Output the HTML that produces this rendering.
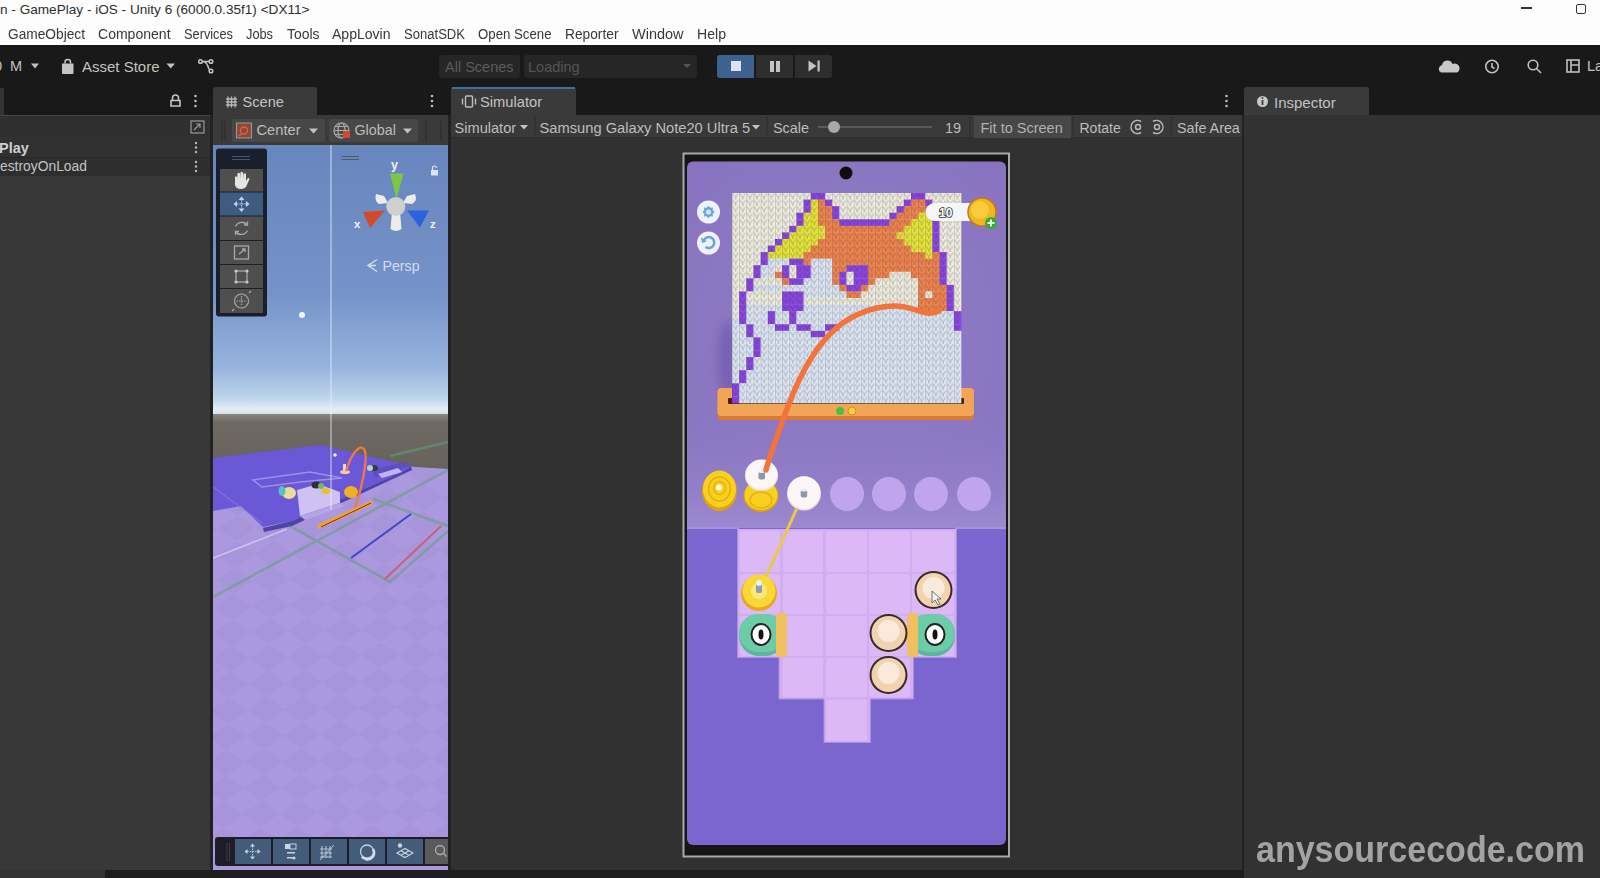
<!DOCTYPE html>
<html><head><meta charset="utf-8">
<style>
*{box-sizing:border-box;margin:0;padding:0}
html,body{width:1600px;height:878px;overflow:hidden;background:#191919;font-family:"Liberation Sans",sans-serif;position:relative}
.a{position:absolute}
.t{position:absolute;white-space:nowrap;line-height:1}
.m{position:absolute;white-space:nowrap;line-height:1;top:26.8px;font-size:14px;color:#383838}
.tb{position:absolute;white-space:nowrap;line-height:1;color:#c2c2c2;font-size:14.5px}
svg{position:absolute;left:0;top:0}
</style></head><body>
<!-- title + menu -->
<div class="a" style="left:0;top:0;width:1600px;height:45px;background:#fdfdfd"></div>
<div class="t" style="left:0;top:3px;font-size:13.6px;color:#2e2e2e">n - GamePlay - iOS - Unity 6 (6000.0.35f1) &lt;DX11&gt;</div>
<div class="m" style="left:8px;transform:scaleX(0.980);transform-origin:0 0">GameObject</div>
<div class="m" style="left:98px;transform:scaleX(1.002);transform-origin:0 0">Component</div>
<div class="m" style="left:184px;transform:scaleX(0.913);transform-origin:0 0">Services</div>
<div class="m" style="left:246px;transform:scaleX(0.913);transform-origin:0 0">Jobs</div>
<div class="m" style="left:286.5px;transform:scaleX(0.994);transform-origin:0 0">Tools</div>
<div class="m" style="left:332px;transform:scaleX(1.002);transform-origin:0 0">AppLovin</div>
<div class="m" style="left:404px;transform:scaleX(0.933);transform-origin:0 0">SonatSDK</div>
<div class="m" style="left:478px;transform:scaleX(0.944);transform-origin:0 0">Open Scene</div>
<div class="m" style="left:565px;transform:scaleX(0.982);transform-origin:0 0">Reporter</div>
<div class="m" style="left:631.5px;transform:scaleX(1.034);transform-origin:0 0">Window</div>
<div class="m" style="left:696.5px;transform:scaleX(1.007);transform-origin:0 0">Help</div>
<!-- window controls -->
<div class="a" style="left:1521px;top:7px;width:11px;height:1.5px;background:#333"></div>
<div class="a" style="left:1576px;top:4px;width:10px;height:10px;border:1.5px solid #333;border-radius:2px"></div>

<!-- main toolbar -->
<div class="a" style="left:0;top:45px;width:1600px;height:42px;background:#191919"></div>
<div class="tb" style="left:-6px;top:59px">0</div>
<div class="tb" style="left:10px;top:59px">M</div>
<svg width="1600" height="878" style="pointer-events:none">
  <path d="M31 63.5 L39 63.5 L35 68.5Z" fill="#c2c2c2"/>
  <!-- bag -->
  <path d="M62 63.5 h11.5 v9.5 a1 1 0 0 1 -1 1 h-9.5 a1 1 0 0 1 -1 -1z" fill="#c4c4c4"/>
  <path d="M65 63.5 v-1.5 a2.75 2.5 0 0 1 5.5 0 v1.5" stroke="#c4c4c4" stroke-width="1.5" fill="none"/>
  <path d="M166.5 63.5 L175 63.5 L170.75 68.5Z" fill="#c2c2c2"/>
  <!-- branch icon -->
  <g stroke="#c4c4c4" stroke-width="1.5" fill="none">
    <circle cx="200.5" cy="61.5" r="1.8"/><circle cx="211" cy="61.5" r="1.8"/><circle cx="211" cy="71" r="1.8"/>
    <path d="M202 61.5 h7 M203 61.5 q4 0 6 8"/>
  </g>
</svg>
<div class="tb" style="left:82px;top:59px;font-size:15px">Asset Store</div>
<!-- scenes -->
<div class="a" style="left:439px;top:55px;width:81px;height:23px;background:#262626;border-radius:3px"></div>
<div class="tb" style="left:445px;top:59.5px;font-size:14.5px;color:#5c5c5c">All Scenes</div>
<div class="a" style="left:524px;top:55px;width:173px;height:23px;background:#262626;border-radius:3px"></div>
<div class="tb" style="left:528px;top:59.5px;font-size:14.5px;color:#555">Loading</div>
<svg width="1600" height="878"><path d="M683 64 L691 64 L687 68Z" fill="#555"/></svg>
<!-- play controls -->
<div class="a" style="left:717px;top:55px;width:37px;height:23px;background:#3f6190;border-radius:3px 0 0 3px"></div>
<div class="a" style="left:756px;top:55px;width:37px;height:23px;background:#2e2e2e"></div>
<div class="a" style="left:795px;top:55px;width:37px;height:23px;background:#2e2e2e;border-radius:0 3px 3px 0"></div>
<div class="a" style="left:731px;top:61px;width:10px;height:10px;background:#dde3ea"></div>
<div class="a" style="left:770px;top:60.5px;width:3.5px;height:11px;background:#c4c4c4"></div>
<div class="a" style="left:776px;top:60.5px;width:3.5px;height:11px;background:#c4c4c4"></div>
<svg width="1600" height="878"><path d="M808.5 60.5 L816.5 66 L808.5 71.5Z" fill="#c4c4c4"/><rect x="817.5" y="60.5" width="2.2" height="11" fill="#c4c4c4"/></svg>
<!-- right icons -->
<svg width="1600" height="878">
  <path d="M1441 72.5 a4 4 0 0 1 1-7.5 a5.5 5.5 0 0 1 10.5-1 a4 4 0 0 1 4.5 8.5z" fill="#c8c8c8"/>
  <g stroke="#c0c0c0" stroke-width="1.6" fill="none">
    <circle cx="1492" cy="66.5" r="6.2"/><path d="M1492 63 v4 l2.5 1.5"/>
    <circle cx="1533" cy="65" r="4.8"/><path d="M1536.5 68.5 l4.5 4.5"/>
    <rect x="1567" y="60" width="12" height="12"/><path d="M1571 60 v12 M1571 65 h8"/>
  </g>
</svg>
<div class="tb" style="left:1587px;top:59px;font-size:14.5px">La</div>

<!-- tab row -->
<div class="a" style="left:0;top:87px;width:1600px;height:28px;background:#191919"></div>
<div class="a" style="left:0;top:88px;width:4px;height:27px;background:#333"></div>
<svg width="1600" height="878">
  <g stroke="#c4c4c4" stroke-width="1.6" fill="none"><path d="M171 106 h9 v-5.5 h-9 z M172.5 100.5 v-2.5 a3 3 0 0 1 6 0 v2.5"/></g>
  <g fill="#bdbdbd"><circle cx="195.5" cy="96" r="1.3"/><circle cx="195.5" cy="101" r="1.3"/><circle cx="195.5" cy="106" r="1.3"/>
  <circle cx="432" cy="96" r="1.3"/><circle cx="432" cy="101" r="1.3"/><circle cx="432" cy="106" r="1.3"/>
  <circle cx="1226.5" cy="96" r="1.3"/><circle cx="1226.5" cy="101" r="1.3"/><circle cx="1226.5" cy="106" r="1.3"/></g>
</svg>
<!-- hierarchy body -->
<div class="a" style="left:0;top:115px;width:210px;height:755px;background:#383838"></div>
<div class="a" style="left:0;top:115px;width:210px;height:1px;background:#454545"></div>
<div class="a" style="left:0;top:116px;width:210px;height:21px;background:#2f2f2f"></div>
<div class="a" style="left:0;top:137px;width:210px;height:20px;background:#303030"></div>
<div class="a" style="left:0;top:157px;width:210px;height:19px;background:#2e2e2e"></div>
<div class="a" style="left:0;top:157px;width:210px;height:1px;background:#262626"></div>
<svg width="1600" height="878">
  <g stroke="#9a9a9a" stroke-width="1.2" fill="none"><rect x="191" y="121" width="13" height="12"/><path d="M194 130 l6-6 M196 124 h4 v4"/></g>
  <g fill="#b8b8b8"><circle cx="196" cy="143" r="1.2"/><circle cx="196" cy="147.5" r="1.2"/><circle cx="196" cy="152" r="1.2"/>
  <circle cx="196" cy="162" r="1.2"/><circle cx="196" cy="166.5" r="1.2"/><circle cx="196" cy="171" r="1.2"/></g>
</svg>
<div class="t" style="left:-1px;top:141px;font-size:14.5px;font-weight:bold;color:#cfcfcf">Play</div>
<div class="t" style="left:0;top:160px;font-size:13.85px;color:#c4c4c4">estroyOnLoad</div>
<div class="a" style="left:0;top:870px;width:105px;height:8px;background:#333"></div>

<!-- scene tab + toolbar -->
<div class="a" style="left:213px;top:87px;width:104px;height:28px;background:#3a3a3a;border-radius:3px 3px 0 0"></div>
<div class="t" style="left:242.5px;top:95px;font-size:14.6px;color:#c2c2c2">Scene</div>
<svg width="1600" height="878"><g stroke="#b8b8b8" stroke-width="1.3"><path d="M228 96.5 v11 M231.5 96.5 v11 M235 96.5 v11 M226 99 h11 M226 102 h11 M226 105 h11"/></g></svg>
<div class="a" style="left:213px;top:115px;width:235px;height:30px;background:#3a3a3a"></div>
<div class="a" style="left:231.5px;top:119px;width:93px;height:23px;background:#474747;border-radius:2px"></div>
<div class="a" style="left:329px;top:119px;width:89px;height:23px;background:#474747;border-radius:2px"></div>
<svg width="1600" height="878">
  <rect x="236.5" y="123" width="15" height="15" fill="#8c4a38" stroke="#9a9a9a" stroke-width="1"/>
  <circle cx="244" cy="130.5" r="3.5" stroke="#e06040" stroke-width="1.3" fill="none"/><path d="M239 136 l3-3" stroke="#e06040" stroke-width="1.3"/>
  <path d="M309 128.5 h9 l-4.5 5z" fill="#c2c2c2"/>
  <g stroke="#aaa" stroke-width="1.2" fill="none"><circle cx="341.5" cy="130.5" r="7.5"/><ellipse cx="341.5" cy="130.5" rx="3.5" ry="7.5"/><path d="M334 130.5 h15 M335 126.5 h13 M335 134.5 h13"/></g>
  <rect x="343" y="131" width="7" height="7" fill="#c84a30"/>
  <path d="M403 128.5 h9 l-4.5 5z" fill="#c2c2c2"/>
  <g stroke="#2a2a2a" stroke-width="1"><path d="M222 121 v20 M225 121 v20 M426 121 v20 M441 121 v20"/></g>
</svg>
<div class="t" style="left:256.5px;top:123.2px;font-size:14.7px;color:#bdbdbd">Center</div>
<div class="t" style="left:354.5px;top:123.2px;font-size:14.3px;color:#bdbdbd">Global</div>

<!-- simulator tab + toolbar -->
<div class="a" style="left:451px;top:87px;width:125px;height:28px;background:#3a3a3a;border-radius:3px 3px 0 0"></div>
<div class="a" style="left:452px;top:87px;width:123px;height:2px;background:#3b6ea5"></div>
<svg width="1600" height="878"><g stroke="#bcbcbc" stroke-width="1.4" fill="none"><rect x="465.5" y="96" width="7" height="11" rx="1"/><path d="M462.5 98.5 v6 M475.5 98.5 v6"/></g></svg>
<div class="t" style="left:480px;top:95px;font-size:14.7px;color:#c2c2c2">Simulator</div>
<div class="a" style="left:451px;top:115px;width:791px;height:22px;background:#393939"></div>
<div class="a" style="left:451px;top:137px;width:791px;height:733px;background:#313131"></div>
<div class="a" style="left:451px;top:137px;width:791px;height:1px;background:#2c2c2c"></div>
<div class="t" style="left:454.5px;top:120.8px;font-size:14.6px;color:#bdbdbd">Simulator</div>
<div class="t" style="left:539.5px;top:120.8px;font-size:14.7px;color:#bdbdbd">Samsung Galaxy Note20 Ultra 5</div>
<div class="t" style="left:773px;top:120.8px;font-size:14.4px;color:#bdbdbd">Scale</div>
<div class="a" style="left:973.5px;top:115.5px;width:97.5px;height:22px;background:#474747"></div>
<div class="t" style="left:980.5px;top:120.8px;font-size:14.5px;color:#b0b0b0">Fit to Screen</div>
<div class="t" style="left:945px;top:120.8px;font-size:14.5px;color:#bdbdbd">19</div>
<div class="t" style="left:1079.5px;top:120.8px;font-size:14px;color:#bdbdbd">Rotate</div>
<div class="t" style="left:1177px;top:120.8px;font-size:14.3px;color:#bdbdbd">Safe Area</div>
<svg width="1600" height="878">
  <path d="M520 125 h8 l-4 4.5z M752 125 h8 l-4 4.5z" fill="#c2c2c2"/>
  <rect x="818" y="126" width="114" height="2" fill="#5a5a5a"/>
  <circle cx="834" cy="127" r="6" fill="#a8a8a8"/>
  <g stroke="#b8b8b8" stroke-width="1.5" fill="none">
    <path d="M1141 121.5 a6.5 6.5 0 1 0 0 11"/><circle cx="1138" cy="127" r="2.5"/>
    <path d="M1153 121.5 a6.5 6.5 0 1 1 0 11"/><circle cx="1157" cy="127" r="2.5"/>
  </g>
  <g stroke="#2c2c2c" stroke-width="1"><path d="M535 117 v18 M767 117 v18 M970 117 v18 M1073 117 v18 M1171 117 v18"/></g>
</svg>
<!-- separators -->
<div class="a" style="left:1242px;top:115px;width:2px;height:755px;background:#222"></div>
<div class="a" style="left:448px;top:115px;width:3px;height:755px;background:#222"></div>
<div class="a" style="left:210px;top:115px;width:3px;height:755px;background:#222"></div>

<!-- inspector -->
<div class="a" style="left:1244px;top:87px;width:125px;height:28px;background:#3a3a3a;border-radius:3px 3px 0 0"></div>
<svg width="1600" height="878"><circle cx="1262.5" cy="101.5" r="5.5" fill="#c8c8c8"/><rect x="1261.6" y="100" width="1.8" height="5" fill="#3a3a3a"/><circle cx="1262.5" cy="98" r="1" fill="#3a3a3a"/></svg>
<div class="t" style="left:1274px;top:95px;font-size:15px;color:#c2c2c2">Inspector</div>
<div class="a" style="left:1244px;top:115px;width:356px;height:763px;background:#323232"></div>

<!-- bottom strip -->
<div class="a" style="left:105px;top:870px;width:1139px;height:8px;background:#1e1e1e"></div>
<!-- watermark -->
<div class="t" style="left:1256px;top:832px;font-size:36px;font-weight:bold;color:#a3a3a3;transform:scaleX(0.945);transform-origin:0 0">anysourcecode.com</div>

<svg width="1600" height="878">
<defs>
  <linearGradient id="sky" x1="0" y1="145" x2="0" y2="416" gradientUnits="userSpaceOnUse">
    <stop offset="0" stop-color="#6786be"/>
    <stop offset="0.55" stop-color="#7593c8"/>
    <stop offset="0.82" stop-color="#97b4de"/>
    <stop offset="0.93" stop-color="#bcd3ea"/>
    <stop offset="0.975" stop-color="#e2edf4"/>
    <stop offset="1" stop-color="#d8dde0"/>
  </linearGradient>
  <linearGradient id="grd" x1="0" y1="414" x2="0" y2="470" gradientUnits="userSpaceOnUse">
    <stop offset="0" stop-color="#8a857e"/>
    <stop offset="0.15" stop-color="#6e6962"/>
    <stop offset="1" stop-color="#67625c"/>
  </linearGradient>
  <clipPath id="scl"><rect x="213" y="145" width="235" height="725"/></clipPath>
  <pattern id="chk" width="44" height="44" patternUnits="userSpaceOnUse" patternTransform="rotate(35) skewX(-20)">
    <rect width="44" height="44" fill="#ab98de"/>
    <rect width="22" height="22" fill="#a894da"/>
    <rect x="22" y="22" width="22" height="22" fill="#a894da"/>
  </pattern>
</defs>
<g clip-path="url(#scl)">
  <rect x="213" y="145" width="235" height="272" fill="url(#sky)"/>
  <rect x="213" y="414" width="235" height="60" fill="url(#grd)"/>
  <!-- light purple ground plane -->
  <path d="M213 492 L300 462 L400 466 L448 469 L448 870 L213 870Z" fill="url(#chk)"/>
  <!-- grid lines -->
  <g stroke="#62a07c" stroke-width="2.6" opacity="0.55" fill="none">
    <path d="M390 456 L448 442"/>
    <path d="M213 597 L448 470"/>
    <path d="M290 526 L390 582 L448 531"/>
    <path d="M373 499 L448 526"/>
  </g>
  <path d="M213 558 L287 529" stroke="#d9d0f4" stroke-width="1.5" opacity="0.8"/>
  <path d="M351 558 L411 514" stroke="#3a48c8" stroke-width="2"/>
  <path d="M385 579 L441 526" stroke="#c86070" stroke-width="2"/>
  <!-- dark platform -->
  <path d="M213 458 L320 445 L411 466 L402 472 L292 521 L263 527 L241 506 L213 511Z" fill="#6a58d6"/>
  <path d="M213 487 L262 523" stroke="#8a7ae0" stroke-width="1.2" opacity="0.7"/>
  <path d="M263 528 L292 521 L402 472 L411 466 L412 470 L292 526 L264 532Z" fill="#4f43a8"/>
  <path d="M253 480 L310 472 L342 478 L300 482 L262 487Z" fill="none" stroke="#b5a6ec" stroke-width="1.5" opacity="0.7"/>
  <!-- objects -->
  <path d="M372 470 L405 462 L410 466 L375 478Z" fill="#5d4fc0"/>
  <path d="M378 474 L398 468 L402 472 L382 478Z" fill="#d8ccf4" opacity="0.8"/>
  <path d="M297 490 L318 484 L340 492 L340 503 L300 516Z" fill="#cfc2f2"/>
  <path d="M300 516 L340 503 L345 506 L305 520Z" fill="#b4a4e8"/>
  <ellipse cx="289" cy="493" rx="7" ry="6" fill="#eedc96"/><ellipse cx="282" cy="491" rx="3.5" ry="5" fill="#58c0c0"/>
  <ellipse cx="316" cy="485" rx="4.5" ry="3.5" fill="#303038"/><ellipse cx="321" cy="486" rx="3" ry="3" fill="#7ab860"/>
  <ellipse cx="326" cy="491" rx="5" ry="3" fill="#e8c030"/>
  <ellipse cx="351" cy="492" rx="7" ry="6" fill="#f0b020"/>
  <ellipse cx="374" cy="468" rx="4" ry="3" fill="#3a3a40"/><ellipse cx="370" cy="468" rx="3" ry="3" fill="#b8d0c0"/>
  <rect x="343" y="464" width="3" height="8" fill="#e8d8d0"/><ellipse cx="345" cy="472" rx="5" ry="2" fill="#f4c8b0"/>
  <circle cx="335" cy="455" r="1.8" fill="#f0f0ff"/>
  <path d="M346 471 C352 452 360 444 364 449 C369 456 361 492 354 512" stroke="#f07848" stroke-width="2.3" fill="none"/>
  <path d="M319 529 L373 504 L372 500 L317 525Z" fill="#f0a038"/>
  <path d="M321 527 L371 503" stroke="#6a3a18" stroke-width="1"/>
  <!-- white vertical line -->
  <path d="M331 145 V510" stroke="#e8f0fa" stroke-width="1.1" opacity="0.75"/>
  <circle cx="302" cy="315" r="3" fill="#f4f4f4"/>
  <!-- tools overlay -->
  <rect x="216" y="148.5" width="51" height="168" rx="3" fill="#1a1f2c"/>
  <path d="M232 156.5 h18 M232 159.5 h18" stroke="#4a5670" stroke-width="1"/>
  <g fill="#4f4f4f">
    <rect x="220" y="169" width="43" height="22.5"/>
    <rect x="220" y="216.5" width="43" height="23.5"/><rect x="220" y="241" width="43" height="23"/>
    <rect x="220" y="265" width="43" height="23"/><rect x="220" y="289" width="43" height="24"/>
  </g>
  <rect x="220" y="192.5" width="43" height="23" fill="#3f5b80"/>
  <path d="M235 183 L235 177 Q236 175.5 237 177 L237 180 L237.5 173.5 Q238.8 172 240 173.5 L240 179 L240.5 172.5 Q241.8 171 243 172.5 L243 179 L243.5 174 Q244.8 172.5 246 174 L246 181 L247.5 178.5 Q249 177.5 249.5 179 L246.5 186 Q245 189 241 189 Q236 189 235 185Z" fill="#e4e4e4"/>
  <g fill="#b8d4ec">
    <path d="M241.5 196.5 l3 3.5 h-6z M241.5 212 l3-3.5 h-6z M233.5 204 l3.5-3 v6z M249.5 204 l-3.5-3 v6z"/>
  </g>
  <path d="M241.5 200 v8.5 M237 204 h9" stroke="#b8d4ec" stroke-width="1" stroke-dasharray="1.5 1"/>
  <g stroke="#a8a8a8" stroke-width="1.3" fill="none">
    <path d="M247.5 225 a7 7 0 0 0 -12 1.5 M235.5 231.5 a7 7 0 0 0 12 -1"/>
    <path d="M247.5 221.5 v3.5 h-3.5 M235.5 235 v-3.5 h3.5"/>
    <rect x="234.5" y="246" width="14" height="13"/><path d="M239 254 l6-5 M242 249 h3 v3"/>
    <rect x="236" y="271" width="11" height="11"/>
  </g>
  <g fill="#c8c8c8"><circle cx="236" cy="271" r="1.6"/><circle cx="247" cy="271" r="1.6"/><circle cx="236" cy="282" r="1.6"/><circle cx="247" cy="282" r="1.6"/></g>
  <g stroke="#a8a8a8" stroke-width="1.2" fill="none">
    <circle cx="241.5" cy="301" r="7"/><path d="M241.5 296 v10 M236.5 301 h10" stroke-dasharray="1.5 1"/>
    <path d="M249 293 l2 -2 M234 309 l-2 2"/>
  </g>
  <!-- gizmo -->
  <g fill="#ececec">
    <path d="M384 196 L376 194 Q374 201 379 204 L388 203Z"/>
    <path d="M407 196 L415 194 Q418 201 412 204 L403 203Z"/>
    <path d="M392 212 L400 212 L401.5 229 Q396 233 390.5 229Z"/>
  </g>
  <path d="M390 173.5 L403.5 173.5 L397 197 L396 197Z" fill="#7cc840"/>
  <path d="M363 212 L385 210.5 L370 228Z" fill="#d44a28"/>
  <path d="M407 210.5 L429 210.5 L420 227.5Z" fill="#2c62dc"/>
  <circle cx="395.8" cy="206.5" r="9.5" fill="#cfcfcf"/>
  <text x="391" y="169" font-size="12.5" font-weight="bold" fill="#eef2fa" font-family="Liberation Sans">y</text>
  <text x="354" y="228" font-size="11.5" font-weight="bold" fill="#eef2fa" font-family="Liberation Sans">x</text>
  <text x="430" y="228" font-size="11.5" font-weight="bold" fill="#eef2fa" font-family="Liberation Sans">z</text>
  <rect x="431" y="170" width="7" height="5.5" fill="#dde4ee"/>
  <path d="M432.5 170 v-2 a2 2 0 0 1 4 0" stroke="#dde4ee" stroke-width="1.2" fill="none"/>
  <path d="M341.5 156.5 h17.5 M341.5 159.5 h17.5" stroke="#4c5a72" stroke-width="1.2"/>
  <path d="M377 259.5 L368 265.5 L377 271.5 M369 265.5 h7" stroke="#d4def0" stroke-width="1.3" fill="none"/>
  <text x="382.5" y="271" font-size="14.2" fill="#d4def0" font-family="Liberation Sans">Persp</text>
  <!-- bottom overlay toolbar -->
  <rect x="215" y="837" width="240" height="29" rx="3" fill="#1e1c28"/>
  <g fill="#435c7a">
    <rect x="235" y="839" width="36" height="25"/><rect x="273" y="839" width="36" height="25"/>
    <rect x="311" y="839" width="36" height="25"/><rect x="349" y="839" width="36" height="25"/>
    <rect x="387" y="839" width="36" height="25"/>
  </g>
  <rect x="425" y="839" width="30" height="25" fill="#5a5a5a"/>
  <path d="M227 843 v18 M229.5 843 v18" stroke="#3a3a46" stroke-width="1"/>
  <g fill="#c8d4e0">
    <path d="M252.5 843.5 l2.5 3 h-5z M252.5 859.5 l2.5-3 h-5z M244.5 851.5 l3-2.5 v5z M260.5 851.5 l-3-2.5 v5z"/>
  </g>
  <path d="M252.5 846 v11 M247 851.5 h11" stroke="#c8d4e0" stroke-width="1" stroke-dasharray="1.5 1.2"/>
  <g fill="#c8d4e0"><rect x="285" y="844" width="5" height="5"/><rect x="290" y="844" width="6" height="5" fill="none" stroke="#c8d4e0" stroke-width="1"/><rect x="287" y="852" width="8" height="1.5"/><rect x="287" y="857" width="8" height="1.5"/><circle cx="294" cy="858" r="1.6"/></g>
  <g stroke="#b8c4d0" stroke-width="1" fill="none"><path d="M322 846 v12 M326 846 v12 M330 846 v12 M320 849 h12 M320 853 h12 M320 857 h12 M320 860 l14-15"/></g>
  <path d="M373 849 A6.3 6.3 0 0 1 362 856.5" stroke="#d8e0ea" stroke-width="2.6" fill="none"/>
  <circle cx="367" cy="851.5" r="6.5" stroke="#c8d4e0" stroke-width="1.3" fill="none"/>
  <circle cx="400" cy="845.5" r="2.2" fill="#c8d4e0"/>
  <path d="M397 853 l8-4.5 l8 4.5 l-8 4.5z M401 850.8 l8 4.5 M409 850.8 l-8 4.5" stroke="#c8d4e0" stroke-width="1.1" fill="none"/>
  <g stroke="#aab0b8" stroke-width="1.3" fill="none"><circle cx="440" cy="850" r="4.5"/><path d="M443.5 853.5 l3 3"/></g>
  <rect x="213" y="866" width="235" height="4" fill="#ab98de"/>
</g>
</svg>

<svg width="1600" height="878">
<defs>
  <clipPath id="scr"><rect x="687" y="161.5" width="319" height="683.5" rx="6"/></clipPath>
  <radialGradient id="topbg" cx="846" cy="330" r="260" gradientUnits="userSpaceOnUse">
    <stop offset="0" stop-color="#8f7cc4"/>
    <stop offset="1" stop-color="#8872c0"/>
  </radialGradient>
  <pattern id="stitch" width="7.156" height="6.5625" patternUnits="userSpaceOnUse" x="732" y="193">
    <path d="M0 0 V6.5625" stroke="#1c2c44" stroke-opacity="0.26" stroke-width="1.4"/>
    <path d="M0.9 0.6 L3.58 4.6 L6.25 0.6" stroke="#1c2c44" stroke-opacity="0.2" stroke-width="1.3" fill="none"/>
    <circle cx="3.58" cy="5.9" r="0.9" fill="#1c2c44" fill-opacity="0.2"/>
  </pattern>
</defs>
<rect x="683.5" y="153.5" width="325.5" height="703" fill="#161616" stroke="#a9a9a9" stroke-width="2"/>
<g clip-path="url(#scr)">
  <rect x="687" y="161" width="320" height="368" fill="url(#topbg)"/>
  <linearGradient id="lowtop" x1="0" y1="400" x2="0" y2="528" gradientUnits="userSpaceOnUse"><stop offset="0" stop-color="#8a76c4" stop-opacity="0"/><stop offset="1" stop-color="#9c8ad0"/></linearGradient><rect x="687" y="400" width="320" height="128" fill="url(#lowtop)"/>
  <rect x="687" y="528" width="320" height="318" fill="#7b65cf"/>
  <!-- knit shadow -->
  <filter id="blur4" x="-50%" y="-50%" width="200%" height="200%"><feGaussianBlur stdDeviation="5"/></filter><ellipse cx="728" cy="360" rx="10" ry="40" fill="#6a50a8" opacity="0.55" filter="url(#blur4)"/>
  <!-- wooden bar -->
  <rect x="717.5" y="388" width="256.5" height="32" rx="4" fill="#d97a34"/>
  <rect x="717.5" y="388" width="256.5" height="28" rx="4" fill="#f2a556"/>
  <rect x="728" y="398" width="236" height="6" rx="1" fill="#4a2210"/>
  <circle cx="840" cy="411" r="4" fill="#46c23c"/>
  <circle cx="852" cy="411" r="4" fill="#f4d040" stroke="#d09020" stroke-width="1"/>
  <!-- knit -->
  <rect x="732" y="193" width="229" height="210" fill="#dde6f0"/>
  <g>
<rect x="732.00" y="193.00" width="79.02" height="6.86" fill="#efecdc"/>
<rect x="810.72" y="193.00" width="14.61" height="6.86" fill="#8b45e0"/>
<rect x="825.03" y="193.00" width="86.17" height="6.86" fill="#efecdc"/>
<rect x="910.91" y="193.00" width="14.61" height="6.86" fill="#8b45e0"/>
<rect x="925.22" y="193.00" width="36.08" height="6.86" fill="#efecdc"/>
<rect x="732.00" y="199.56" width="71.86" height="6.86" fill="#efecdc"/>
<rect x="803.56" y="199.56" width="7.46" height="6.86" fill="#8b45e0"/>
<rect x="810.72" y="199.56" width="7.46" height="6.86" fill="#e6e437"/>
<rect x="817.88" y="199.56" width="7.46" height="6.86" fill="#f0834c"/>
<rect x="825.03" y="199.56" width="7.46" height="6.86" fill="#8b45e0"/>
<rect x="832.19" y="199.56" width="71.86" height="6.86" fill="#efecdc"/>
<rect x="903.75" y="199.56" width="7.46" height="6.86" fill="#8b45e0"/>
<rect x="910.91" y="199.56" width="14.61" height="6.86" fill="#f0834c"/>
<rect x="925.22" y="199.56" width="7.46" height="6.86" fill="#8b45e0"/>
<rect x="932.38" y="199.56" width="28.93" height="6.86" fill="#efecdc"/>
<rect x="732.00" y="206.12" width="71.86" height="6.86" fill="#efecdc"/>
<rect x="803.56" y="206.12" width="7.46" height="6.86" fill="#8b45e0"/>
<rect x="810.72" y="206.12" width="7.46" height="6.86" fill="#e6e437"/>
<rect x="817.88" y="206.12" width="14.61" height="6.86" fill="#f0834c"/>
<rect x="832.19" y="206.12" width="7.46" height="6.86" fill="#8b45e0"/>
<rect x="839.34" y="206.12" width="57.55" height="6.86" fill="#efecdc"/>
<rect x="896.59" y="206.12" width="7.46" height="6.86" fill="#8b45e0"/>
<rect x="903.75" y="206.12" width="28.93" height="6.86" fill="#f0834c"/>
<rect x="932.38" y="206.12" width="28.93" height="6.86" fill="#efecdc"/>
<rect x="732.00" y="212.69" width="64.71" height="6.86" fill="#efecdc"/>
<rect x="796.41" y="212.69" width="7.46" height="6.86" fill="#8b45e0"/>
<rect x="803.56" y="212.69" width="14.61" height="6.86" fill="#e6e437"/>
<rect x="817.88" y="212.69" width="14.61" height="6.86" fill="#f0834c"/>
<rect x="832.19" y="212.69" width="7.46" height="6.86" fill="#8b45e0"/>
<rect x="839.34" y="212.69" width="50.39" height="6.86" fill="#efecdc"/>
<rect x="889.44" y="212.69" width="7.46" height="6.86" fill="#8b45e0"/>
<rect x="896.59" y="212.69" width="21.77" height="6.86" fill="#f0834c"/>
<rect x="918.06" y="212.69" width="14.61" height="6.86" fill="#e6e437"/>
<rect x="932.38" y="212.69" width="28.93" height="6.86" fill="#efecdc"/>
<rect x="732.00" y="219.25" width="64.71" height="6.86" fill="#efecdc"/>
<rect x="796.41" y="219.25" width="7.46" height="6.86" fill="#8b45e0"/>
<rect x="803.56" y="219.25" width="14.61" height="6.86" fill="#e6e437"/>
<rect x="817.88" y="219.25" width="21.77" height="6.86" fill="#f0834c"/>
<rect x="839.34" y="219.25" width="50.39" height="6.86" fill="#8b45e0"/>
<rect x="889.44" y="219.25" width="21.77" height="6.86" fill="#f0834c"/>
<rect x="910.91" y="219.25" width="21.77" height="6.86" fill="#e6e437"/>
<rect x="932.38" y="219.25" width="7.46" height="6.86" fill="#8b45e0"/>
<rect x="939.53" y="219.25" width="21.77" height="6.86" fill="#efecdc"/>
<rect x="732.00" y="225.81" width="57.55" height="6.86" fill="#efecdc"/>
<rect x="789.25" y="225.81" width="7.46" height="6.86" fill="#8b45e0"/>
<rect x="796.41" y="225.81" width="28.93" height="6.86" fill="#e6e437"/>
<rect x="825.03" y="225.81" width="79.02" height="6.86" fill="#f0834c"/>
<rect x="903.75" y="225.81" width="28.93" height="6.86" fill="#e6e437"/>
<rect x="932.38" y="225.81" width="7.46" height="6.86" fill="#8b45e0"/>
<rect x="939.53" y="225.81" width="21.77" height="6.86" fill="#efecdc"/>
<rect x="732.00" y="232.38" width="50.39" height="6.86" fill="#efecdc"/>
<rect x="782.09" y="232.38" width="7.46" height="6.86" fill="#8b45e0"/>
<rect x="789.25" y="232.38" width="36.08" height="6.86" fill="#e6e437"/>
<rect x="825.03" y="232.38" width="71.86" height="6.86" fill="#f0834c"/>
<rect x="896.59" y="232.38" width="36.08" height="6.86" fill="#e6e437"/>
<rect x="932.38" y="232.38" width="7.46" height="6.86" fill="#8b45e0"/>
<rect x="939.53" y="232.38" width="21.77" height="6.86" fill="#efecdc"/>
<rect x="732.00" y="238.94" width="43.24" height="6.86" fill="#efecdc"/>
<rect x="774.94" y="238.94" width="7.46" height="6.86" fill="#8b45e0"/>
<rect x="782.09" y="238.94" width="36.08" height="6.86" fill="#e6e437"/>
<rect x="817.88" y="238.94" width="86.17" height="6.86" fill="#f0834c"/>
<rect x="903.75" y="238.94" width="28.93" height="6.86" fill="#e6e437"/>
<rect x="932.38" y="238.94" width="7.46" height="6.86" fill="#8b45e0"/>
<rect x="939.53" y="238.94" width="21.77" height="6.86" fill="#efecdc"/>
<rect x="732.00" y="245.50" width="36.08" height="6.86" fill="#efecdc"/>
<rect x="767.78" y="245.50" width="7.46" height="6.86" fill="#8b45e0"/>
<rect x="774.94" y="245.50" width="36.08" height="6.86" fill="#e6e437"/>
<rect x="810.72" y="245.50" width="100.49" height="6.86" fill="#f0834c"/>
<rect x="910.91" y="245.50" width="21.77" height="6.86" fill="#e6e437"/>
<rect x="932.38" y="245.50" width="7.46" height="6.86" fill="#8b45e0"/>
<rect x="939.53" y="245.50" width="21.77" height="6.86" fill="#efecdc"/>
<rect x="732.00" y="252.06" width="28.93" height="6.86" fill="#efecdc"/>
<rect x="760.62" y="252.06" width="7.46" height="6.86" fill="#8b45e0"/>
<rect x="767.78" y="252.06" width="36.08" height="6.86" fill="#e6e437"/>
<rect x="803.56" y="252.06" width="121.96" height="6.86" fill="#f0834c"/>
<rect x="925.22" y="252.06" width="7.46" height="6.86" fill="#e6e437"/>
<rect x="932.38" y="252.06" width="7.46" height="6.86" fill="#f0834c"/>
<rect x="939.53" y="252.06" width="7.46" height="6.86" fill="#8b45e0"/>
<rect x="946.69" y="252.06" width="14.61" height="6.86" fill="#efecdc"/>
<rect x="732.00" y="258.62" width="28.93" height="6.86" fill="#efecdc"/>
<rect x="760.62" y="258.62" width="7.46" height="6.86" fill="#8b45e0"/>
<rect x="767.78" y="258.62" width="21.77" height="6.86" fill="#dde6f0"/>
<rect x="789.25" y="258.62" width="14.61" height="6.86" fill="#8b45e0"/>
<rect x="803.56" y="258.62" width="7.46" height="6.86" fill="#f0834c"/>
<rect x="810.72" y="258.62" width="21.77" height="6.86" fill="#dde6f0"/>
<rect x="832.19" y="258.62" width="107.64" height="6.86" fill="#f0834c"/>
<rect x="939.53" y="258.62" width="7.46" height="6.86" fill="#8b45e0"/>
<rect x="946.69" y="258.62" width="14.61" height="6.86" fill="#efecdc"/>
<rect x="732.00" y="265.19" width="21.77" height="6.86" fill="#efecdc"/>
<rect x="753.47" y="265.19" width="7.46" height="6.86" fill="#8b45e0"/>
<rect x="760.62" y="265.19" width="14.61" height="6.86" fill="#dde6f0"/>
<rect x="774.94" y="265.19" width="7.46" height="6.86" fill="#efecdc"/>
<rect x="782.09" y="265.19" width="7.46" height="6.86" fill="#8b45e0"/>
<rect x="789.25" y="265.19" width="7.46" height="6.86" fill="#efecdc"/>
<rect x="796.41" y="265.19" width="14.61" height="6.86" fill="#8b45e0"/>
<rect x="810.72" y="265.19" width="21.77" height="6.86" fill="#dde6f0"/>
<rect x="832.19" y="265.19" width="14.61" height="6.86" fill="#f0834c"/>
<rect x="846.50" y="265.19" width="21.77" height="6.86" fill="#8b45e0"/>
<rect x="867.97" y="265.19" width="71.86" height="6.86" fill="#f0834c"/>
<rect x="939.53" y="265.19" width="7.46" height="6.86" fill="#8b45e0"/>
<rect x="946.69" y="265.19" width="14.61" height="6.86" fill="#efecdc"/>
<rect x="732.00" y="271.75" width="21.77" height="6.86" fill="#efecdc"/>
<rect x="753.47" y="271.75" width="7.46" height="6.86" fill="#8b45e0"/>
<rect x="760.62" y="271.75" width="14.61" height="6.86" fill="#dde6f0"/>
<rect x="774.94" y="271.75" width="7.46" height="6.86" fill="#f0834c"/>
<rect x="782.09" y="271.75" width="7.46" height="6.86" fill="#8b45e0"/>
<rect x="789.25" y="271.75" width="7.46" height="6.86" fill="#efecdc"/>
<rect x="796.41" y="271.75" width="14.61" height="6.86" fill="#8b45e0"/>
<rect x="810.72" y="271.75" width="21.77" height="6.86" fill="#dde6f0"/>
<rect x="832.19" y="271.75" width="7.46" height="6.86" fill="#f0834c"/>
<rect x="839.34" y="271.75" width="7.46" height="6.86" fill="#8b45e0"/>
<rect x="846.50" y="271.75" width="7.46" height="6.86" fill="#efecdc"/>
<rect x="853.66" y="271.75" width="14.61" height="6.86" fill="#8b45e0"/>
<rect x="867.97" y="271.75" width="21.77" height="6.86" fill="#f0834c"/>
<rect x="889.44" y="271.75" width="21.77" height="6.86" fill="#efecdc"/>
<rect x="910.91" y="271.75" width="28.93" height="6.86" fill="#f0834c"/>
<rect x="939.53" y="271.75" width="7.46" height="6.86" fill="#8b45e0"/>
<rect x="946.69" y="271.75" width="14.61" height="6.86" fill="#efecdc"/>
<rect x="732.00" y="278.31" width="14.61" height="6.86" fill="#efecdc"/>
<rect x="746.31" y="278.31" width="7.46" height="6.86" fill="#8b45e0"/>
<rect x="753.47" y="278.31" width="28.93" height="6.86" fill="#efecdc"/>
<rect x="782.09" y="278.31" width="7.46" height="6.86" fill="#f0834c"/>
<rect x="789.25" y="278.31" width="14.61" height="6.86" fill="#8b45e0"/>
<rect x="803.56" y="278.31" width="28.93" height="6.86" fill="#dde6f0"/>
<rect x="832.19" y="278.31" width="7.46" height="6.86" fill="#f0834c"/>
<rect x="839.34" y="278.31" width="7.46" height="6.86" fill="#8b45e0"/>
<rect x="846.50" y="278.31" width="7.46" height="6.86" fill="#efecdc"/>
<rect x="853.66" y="278.31" width="14.61" height="6.86" fill="#8b45e0"/>
<rect x="867.97" y="278.31" width="7.46" height="6.86" fill="#f0834c"/>
<rect x="875.12" y="278.31" width="43.24" height="6.86" fill="#efecdc"/>
<rect x="918.06" y="278.31" width="21.77" height="6.86" fill="#f0834c"/>
<rect x="939.53" y="278.31" width="7.46" height="6.86" fill="#8b45e0"/>
<rect x="946.69" y="278.31" width="14.61" height="6.86" fill="#efecdc"/>
<rect x="732.00" y="284.88" width="14.61" height="6.86" fill="#efecdc"/>
<rect x="746.31" y="284.88" width="7.46" height="6.86" fill="#8b45e0"/>
<rect x="753.47" y="284.88" width="86.17" height="6.86" fill="#dde6f0"/>
<rect x="839.34" y="284.88" width="7.46" height="6.86" fill="#f0834c"/>
<rect x="846.50" y="284.88" width="14.61" height="6.86" fill="#8b45e0"/>
<rect x="860.81" y="284.88" width="7.46" height="6.86" fill="#f0834c"/>
<rect x="867.97" y="284.88" width="50.39" height="6.86" fill="#efecdc"/>
<rect x="918.06" y="284.88" width="28.93" height="6.86" fill="#f0834c"/>
<rect x="946.69" y="284.88" width="7.46" height="6.86" fill="#8b45e0"/>
<rect x="953.84" y="284.88" width="7.46" height="6.86" fill="#efecdc"/>
<rect x="732.00" y="291.44" width="7.46" height="6.86" fill="#efecdc"/>
<rect x="739.16" y="291.44" width="7.46" height="6.86" fill="#8b45e0"/>
<rect x="746.31" y="291.44" width="36.08" height="6.86" fill="#efecdc"/>
<rect x="782.09" y="291.44" width="21.77" height="6.86" fill="#8b45e0"/>
<rect x="803.56" y="291.44" width="43.24" height="6.86" fill="#dde6f0"/>
<rect x="846.50" y="291.44" width="14.61" height="6.86" fill="#f0834c"/>
<rect x="860.81" y="291.44" width="57.55" height="6.86" fill="#efecdc"/>
<rect x="918.06" y="291.44" width="7.46" height="6.86" fill="#f0834c"/>
<rect x="925.22" y="291.44" width="7.46" height="6.86" fill="#efecdc"/>
<rect x="932.38" y="291.44" width="14.61" height="6.86" fill="#f0834c"/>
<rect x="946.69" y="291.44" width="7.46" height="6.86" fill="#8b45e0"/>
<rect x="953.84" y="291.44" width="7.46" height="6.86" fill="#efecdc"/>
<rect x="732.00" y="298.00" width="7.46" height="6.86" fill="#efecdc"/>
<rect x="739.16" y="298.00" width="7.46" height="6.86" fill="#8b45e0"/>
<rect x="746.31" y="298.00" width="36.08" height="6.86" fill="#efecdc"/>
<rect x="782.09" y="298.00" width="21.77" height="6.86" fill="#8b45e0"/>
<rect x="803.56" y="298.00" width="114.80" height="6.86" fill="#efecdc"/>
<rect x="918.06" y="298.00" width="28.93" height="6.86" fill="#f0834c"/>
<rect x="946.69" y="298.00" width="7.46" height="6.86" fill="#8b45e0"/>
<rect x="953.84" y="298.00" width="7.46" height="6.86" fill="#efecdc"/>
<rect x="732.00" y="304.56" width="7.46" height="6.86" fill="#efecdc"/>
<rect x="739.16" y="304.56" width="7.46" height="6.86" fill="#8b45e0"/>
<rect x="746.31" y="304.56" width="36.08" height="6.86" fill="#dde6f0"/>
<rect x="782.09" y="304.56" width="21.77" height="6.86" fill="#8b45e0"/>
<rect x="803.56" y="304.56" width="114.80" height="6.86" fill="#dde6f0"/>
<rect x="918.06" y="304.56" width="28.93" height="6.86" fill="#f0834c"/>
<rect x="946.69" y="304.56" width="7.46" height="6.86" fill="#8b45e0"/>
<rect x="953.84" y="304.56" width="7.46" height="6.86" fill="#efecdc"/>
<rect x="732.00" y="311.12" width="7.46" height="6.86" fill="#efecdc"/>
<rect x="739.16" y="311.12" width="7.46" height="6.86" fill="#8b45e0"/>
<rect x="746.31" y="311.12" width="21.77" height="6.86" fill="#dde6f0"/>
<rect x="767.78" y="311.12" width="7.46" height="6.86" fill="#8b45e0"/>
<rect x="774.94" y="311.12" width="14.61" height="6.86" fill="#dde6f0"/>
<rect x="789.25" y="311.12" width="7.46" height="6.86" fill="#8b45e0"/>
<rect x="796.41" y="311.12" width="157.74" height="6.86" fill="#dde6f0"/>
<rect x="953.84" y="311.12" width="7.46" height="6.86" fill="#8b45e0"/>
<rect x="732.00" y="317.69" width="7.46" height="6.86" fill="#dde6f0"/>
<rect x="739.16" y="317.69" width="7.46" height="6.86" fill="#8b45e0"/>
<rect x="746.31" y="317.69" width="21.77" height="6.86" fill="#dde6f0"/>
<rect x="767.78" y="317.69" width="7.46" height="6.86" fill="#8b45e0"/>
<rect x="774.94" y="317.69" width="14.61" height="6.86" fill="#dde6f0"/>
<rect x="789.25" y="317.69" width="7.46" height="6.86" fill="#8b45e0"/>
<rect x="796.41" y="317.69" width="157.74" height="6.86" fill="#dde6f0"/>
<rect x="953.84" y="317.69" width="7.46" height="6.86" fill="#8b45e0"/>
<rect x="732.00" y="324.25" width="14.61" height="6.86" fill="#dde6f0"/>
<rect x="746.31" y="324.25" width="7.46" height="6.86" fill="#8b45e0"/>
<rect x="753.47" y="324.25" width="21.77" height="6.86" fill="#dde6f0"/>
<rect x="774.94" y="324.25" width="14.61" height="6.86" fill="#8b45e0"/>
<rect x="789.25" y="324.25" width="7.46" height="6.86" fill="#dde6f0"/>
<rect x="796.41" y="324.25" width="14.61" height="6.86" fill="#8b45e0"/>
<rect x="810.72" y="324.25" width="14.61" height="6.86" fill="#dde6f0"/>
<rect x="825.03" y="324.25" width="14.61" height="6.86" fill="#8b45e0"/>
<rect x="839.34" y="324.25" width="114.80" height="6.86" fill="#dde6f0"/>
<rect x="953.84" y="324.25" width="7.46" height="6.86" fill="#8b45e0"/>
<rect x="732.00" y="330.81" width="14.61" height="6.86" fill="#dde6f0"/>
<rect x="746.31" y="330.81" width="7.46" height="6.86" fill="#8b45e0"/>
<rect x="753.47" y="330.81" width="57.55" height="6.86" fill="#dde6f0"/>
<rect x="810.72" y="330.81" width="14.61" height="6.86" fill="#8b45e0"/>
<rect x="825.03" y="330.81" width="136.27" height="6.86" fill="#dde6f0"/>
<rect x="732.00" y="337.38" width="21.77" height="6.86" fill="#dde6f0"/>
<rect x="753.47" y="337.38" width="7.46" height="6.86" fill="#8b45e0"/>
<rect x="760.62" y="337.38" width="200.68" height="6.86" fill="#dde6f0"/>
<rect x="732.00" y="343.94" width="21.77" height="6.86" fill="#dde6f0"/>
<rect x="753.47" y="343.94" width="7.46" height="6.86" fill="#8b45e0"/>
<rect x="760.62" y="343.94" width="200.68" height="6.86" fill="#dde6f0"/>
<rect x="732.00" y="350.50" width="21.77" height="6.86" fill="#dde6f0"/>
<rect x="753.47" y="350.50" width="7.46" height="6.86" fill="#8b45e0"/>
<rect x="760.62" y="350.50" width="200.68" height="6.86" fill="#dde6f0"/>
<rect x="732.00" y="357.06" width="14.61" height="6.86" fill="#dde6f0"/>
<rect x="746.31" y="357.06" width="7.46" height="6.86" fill="#8b45e0"/>
<rect x="753.47" y="357.06" width="207.83" height="6.86" fill="#dde6f0"/>
<rect x="732.00" y="363.62" width="14.61" height="6.86" fill="#dde6f0"/>
<rect x="746.31" y="363.62" width="7.46" height="6.86" fill="#8b45e0"/>
<rect x="753.47" y="363.62" width="207.83" height="6.86" fill="#dde6f0"/>
<rect x="732.00" y="370.19" width="7.46" height="6.86" fill="#dde6f0"/>
<rect x="739.16" y="370.19" width="7.46" height="6.86" fill="#8b45e0"/>
<rect x="746.31" y="370.19" width="214.99" height="6.86" fill="#dde6f0"/>
<rect x="732.00" y="376.75" width="7.46" height="6.86" fill="#dde6f0"/>
<rect x="739.16" y="376.75" width="7.46" height="6.86" fill="#8b45e0"/>
<rect x="746.31" y="376.75" width="214.99" height="6.86" fill="#dde6f0"/>
<rect x="732.00" y="383.31" width="7.46" height="6.86" fill="#8b45e0"/>
<rect x="739.16" y="383.31" width="222.14" height="6.86" fill="#dde6f0"/>
<rect x="732.00" y="389.88" width="7.46" height="6.86" fill="#8b45e0"/>
<rect x="739.16" y="389.88" width="222.14" height="6.86" fill="#dde6f0"/>
<rect x="732.00" y="396.44" width="7.46" height="6.86" fill="#8b45e0"/>
<rect x="739.16" y="396.44" width="222.14" height="6.86" fill="#dde6f0"/>
  </g>
  <rect x="732" y="193" width="229" height="210" fill="url(#stitch)"/>
  <!-- camera -->
  <circle cx="846" cy="173" r="6.5" fill="#0e0e0e"/>
  <!-- buttons -->
  <circle cx="708.5" cy="212" r="11.5" fill="#eef2fa"/>
  <polygon points="714.70,212.00 712.75,213.76 712.88,216.38 710.26,216.25 708.50,218.20 706.74,216.25 704.12,216.38 704.25,213.76 702.30,212.00 704.25,210.24 704.12,207.62 706.74,207.75 708.50,205.80 710.26,207.75 712.88,207.62 712.75,210.24" fill="#6aa6dc"/><circle cx="708.5" cy="212" r="2.6" fill="#c8ecff"/>
  <circle cx="708.5" cy="243" r="11.5" fill="#eef2fa"/>
  <path d="M703.5 241 a5.5 5.5 0 1 1 2 6" stroke="#6aa6dc" stroke-width="2.6" fill="none"/>
  <path d="M701 237.5 l1 5.5 l5 -1.5z" fill="#6aa6dc"/>
  <!-- coin pill -->
  <rect x="925.5" y="203" width="62" height="18" rx="9" fill="#f4f6fa"/>
  <text x="939" y="217" font-size="12" font-weight="bold" fill="#fff" stroke="#333" stroke-width="1.6" paint-order="stroke" font-family="Liberation Sans">10</text>
  <circle cx="982" cy="212" r="14" fill="#f0b820" stroke="#c87818" stroke-width="1.5"/>
  <circle cx="980" cy="210" r="9" fill="#f8cc3a"/>
  <circle cx="991" cy="223" r="6" fill="#3aa838"/>
  <path d="M991 219.5 v7 M987.5 223 h7" stroke="#e8ffe0" stroke-width="2"/>
  <!-- top slot row -->
  <g fill="#c0a4ec">
    <circle cx="847" cy="494" r="17"/><circle cx="889" cy="494" r="17"/><circle cx="931" cy="494" r="17"/><circle cx="974" cy="494" r="17"/>
  </g>
  <!-- spools -->
  <ellipse cx="719.5" cy="491" rx="17.5" ry="20" fill="#e0a010"/>
  <ellipse cx="719.5" cy="489" rx="16.5" ry="18.5" fill="#f8d020"/>
  <g fill="none" stroke="#e4b012" stroke-width="1.4"><ellipse cx="719.5" cy="489" rx="11" ry="12"/><ellipse cx="719.5" cy="488" rx="6" ry="6.5"/></g>
  <circle cx="719" cy="487.5" r="3" fill="#fffbe8"/>
  <ellipse cx="761" cy="496" rx="17.5" ry="16" fill="#e0a010"/>
  <ellipse cx="761" cy="495" rx="16.5" ry="15" fill="#f8d020"/>
  <g fill="none" stroke="#e4b012" stroke-width="1.4"><ellipse cx="761" cy="500" rx="11" ry="8"/></g>
  <ellipse cx="761.5" cy="475.5" rx="16.5" ry="15.5" fill="#ece0e4"/>
  <ellipse cx="761.5" cy="474.5" rx="16" ry="15" fill="#fdf6f6"/>
  <rect x="758.5" y="471" width="6.5" height="8.5" rx="2" fill="#8a9aaa"/><ellipse cx="761.75" cy="471.5" rx="3.2" ry="1.6" fill="#e6eef6"/>
  <circle cx="804" cy="493.5" r="17" fill="#ece0e4"/><circle cx="804" cy="492.5" r="16.3" fill="#fdf6f6"/>
  <rect x="800.7" y="489.5" width="6.5" height="8" rx="2" fill="#8a9aaa"/><ellipse cx="804" cy="490" rx="3.2" ry="1.6" fill="#e6eef6"/>
  <!-- thread orange -->
  <path d="M939 311 C925 318 915 306 895 306 C870 306 845 318 830 334 C808 356 794 388 783 420 C777 437 770 455 766 470" stroke="#f2743a" stroke-width="5.5" fill="none" stroke-linecap="round"/>
  <!-- board -->
  <path d="M687 528 H738 V657 H779.5 V698.5 H824.5 V742 H870 V698.5 H913 V657 H956 V528 H1006" stroke="#a890e0" stroke-width="2" fill="none"/>
  <path d="M738 529 H956 V657 H913 V698.5 H870 V742 H824.5 V698.5 H779.5 V657 H738Z" fill="#d2aef0"/>
  <g fill="#dcb8f6">
    <rect x="740" y="531" width="40" height="41" rx="2"/><rect x="783" y="531" width="40" height="41" rx="2"/><rect x="826" y="531" width="41" height="41" rx="2"/><rect x="869" y="531" width="41" height="41" rx="2"/><rect x="912" y="531" width="42" height="41" rx="2"/>
    <rect x="740" y="574" width="40" height="40" rx="2"/><rect x="783" y="574" width="40" height="40" rx="2"/><rect x="826" y="574" width="41" height="40" rx="2"/><rect x="869" y="574" width="41" height="40" rx="2"/><rect x="912" y="574" width="42" height="40" rx="2"/>
    <rect x="740" y="616" width="40" height="40" rx="2"/><rect x="783" y="616" width="40" height="40" rx="2"/><rect x="826" y="616" width="41" height="40" rx="2"/><rect x="869" y="616" width="41" height="40" rx="2"/><rect x="912" y="616" width="42" height="40" rx="2"/>
    <rect x="783" y="658" width="40" height="39" rx="2"/><rect x="826" y="658" width="41" height="39" rx="2"/><rect x="869" y="658" width="41" height="39" rx="2"/>
    <rect x="826" y="700" width="41" height="41" rx="2"/>
  </g>
  <path d="M797 508 L760 590" stroke="#e8c848" stroke-width="3"/>
  <!-- board pieces -->
  <circle cx="759" cy="593" r="18" fill="#e8a818"/><circle cx="759" cy="591" r="16.5" fill="#f8d838"/><circle cx="759" cy="591" r="8" fill="#fce878"/><rect x="756" y="583" width="6" height="10" rx="2" fill="#8aa0b8"/><circle cx="759" cy="583" r="3" fill="#e8f0f8"/>
  <rect x="739" y="614" width="46" height="42" rx="20" fill="#58b898"/>
  <rect x="739" y="614" width="46" height="38" rx="19" fill="#6ccca8"/>
  <rect x="776" y="613" width="11" height="44" rx="4" fill="#f0c060"/>
  <ellipse cx="761" cy="634.5" rx="9.5" ry="10.5" fill="#fff" stroke="#222" stroke-width="2"/>
  <ellipse cx="761" cy="634.5" rx="2.5" ry="5" fill="#111"/>
  <rect x="909" y="614" width="46" height="42" rx="20" fill="#58b898"/>
  <rect x="909" y="614" width="46" height="38" rx="19" fill="#6ccca8"/>
  <rect x="907" y="613" width="11" height="44" rx="4" fill="#f0c060"/>
  <ellipse cx="935" cy="634.5" rx="9.5" ry="10.5" fill="#fff" stroke="#222" stroke-width="2"/>
  <ellipse cx="935" cy="634.5" rx="2.5" ry="5" fill="#111"/>
  <g>
    <circle cx="933.5" cy="590" r="19" fill="#3a2a24"/><circle cx="933.5" cy="590" r="17" fill="#f2d2b0"/><circle cx="933.5" cy="588" r="11" fill="#faeadc"/>
    <circle cx="888.5" cy="633" r="19" fill="#3a2a24"/><circle cx="888.5" cy="633" r="17" fill="#f2d2b0"/><circle cx="888.5" cy="631" r="11" fill="#faeadc"/>
    <circle cx="888.5" cy="675" r="19" fill="#3a2a24"/><circle cx="888.5" cy="675" r="17" fill="#f2d2b0"/><circle cx="888.5" cy="673" r="11" fill="#faeadc"/>
  </g>
  <path d="M932 591 v12 l3-3 l3 5 l2-1 l-3-5 h4z" fill="#f0f0f0" stroke="#555" stroke-width="0.8"/>
</g>
</svg>

</body></html>
